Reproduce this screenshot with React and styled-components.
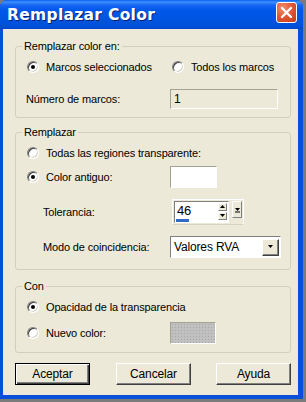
import React from "react";
import styled, { createGlobalStyle } from "styled-components";

const Global = createGlobalStyle`
  html, body {
    margin: 0;
    padding: 0;
    background: #7b7b7b;
  }
  body {
    font-family: "Liberation Sans", Arial, sans-serif;
    font-size: 11px;
    letter-spacing: -0.15px;
    color: #000;
  }
`;

const Window = styled.div`
  width: 303px;
  height: 399px;
  display: flex;
  flex-direction: column;
  background: #0a4fd8;
  border-radius: 7px 7px 0 0;
  overflow: hidden;
`;

const TitleBar = styled.div`
  height: 29px;
  flex: none;
  display: flex;
  align-items: center;
  justify-content: space-between;
  padding: 0 6px 0 7px;
  background: linear-gradient(
    #0a5ff0 0,
    #3c90fb 2px,
    #1767f3 5px,
    #0058ea 10px,
    #0055e3 60%,
    #0050d8 90%,
    #0046c8 100%
  );
`;

const Title = styled.span`
  font-family: "DejaVu Sans", Verdana, sans-serif;
  font-weight: bold;
  font-size: 15.5px;
  color: #fff;
  text-shadow: 1px 1px 0 #0a1f6e;
  letter-spacing: 0.3px;
`;

const CloseBtn = styled.div`
  width: 21px;
  height: 21px;
  box-sizing: border-box;
  border: 1px solid #fff;
  border-radius: 3px;
  background: radial-gradient(circle at 30% 25%, #f08f6c 0, #e25a37 45%, #c8381a 100%);
  display: flex;
  align-items: center;
  justify-content: center;
  margin-top: -4px;
`;

const Body = styled.div`
  flex: 1;
  margin: 0 5px 4px 3px;
  background: #ece9d8;
  padding: 10px 0 0 12px;
  display: flex;
  flex-direction: column;
`;

const Group = styled.fieldset`
  box-sizing: border-box;
  width: 276px;
  height: ${(p) => p.$h}px;
  margin: 0 0 ${(p) => p.$mb}px 0;
  padding: 0;
  border: 1px solid #d0d0bf;
  border-radius: 3px;
  display: flex;
  flex-direction: column;
`;

const Legend = styled.legend`
  margin-left: 6px;
  padding: 0 2px;
  line-height: 14px;
  font-size: 11px;
`;

const Row = styled.div`
  display: grid;
  grid-template-columns: 154px 1fr;
  align-items: center;
  height: ${(p) => p.$h}px;
  margin-top: ${(p) => p.$mt}px;
`;

const Label = styled.span`
  padding-left: ${(p) => p.$indent}px;
  white-space: nowrap;
`;

const RadioWrap = styled.label`
  display: flex;
  align-items: center;
  gap: 7px;
  padding-left: ${(p) => p.$indent ?? 11}px;
  white-space: nowrap;
`;

const Circle = styled.span`
  position: relative;
  width: 12px;
  height: 12px;
  box-sizing: border-box;
  border-radius: 50%;
  background: #fff;
  border: 1px solid;
  border-color: #808080 #fff #fff #808080;
  box-shadow: inset 1px 1px 0 #404040, inset -1px -1px 0 #d4d0c8;
  flex: none;

  &::after {
    content: "";
    display: ${(p) => (p.$on ? "block" : "none")};
    position: absolute;
    left: 3px;
    top: 3px;
    width: 4px;
    height: 4px;
    border-radius: 50%;
    background: #000;
  }
`;

const Radio = ({ on, children, indent }) => (
  <RadioWrap $indent={indent}>
    <Circle $on={on} />
    {children}
  </RadioWrap>
);

const Sunken = styled.div`
  box-sizing: border-box;
  width: ${(p) => p.$w}px;
  height: ${(p) => p.$h}px;
  border: 1px solid;
  border-color: #a5a294 #fff #fff #a5a294;
  background: ${(p) => p.$bg || "#fff"};
  display: flex;
  align-items: flex-start;
  padding: 2px 0 0 3px;
  font-size: 12px;
`;

const Swatch = styled(Sunken)`
  background-color: #c0c0c0;
  background-image: radial-gradient(#a8a8a8 0.6px, transparent 0.8px);
  background-size: 3px 3px;
`;

const Spin = styled.div`
  display: flex;
  align-items: flex-start;
  gap: 3px;
  margin-left: 2px;
  height: 26px;
  box-sizing: border-box;
  padding: 1px;
  width: 72px;
  border: 1px solid;
  border-color: #fff #fff #d6d3c4 #fff;
`;

const SpinField = styled.div`
  position: relative;
  box-sizing: border-box;
  width: 57px;
  height: 22px;
  background: #fff;
  border: 1px solid;
  border-color: #7f7f7f #fff #fff #7f7f7f;
  font-size: 13px;
  padding: 1px 0 0 2px;
`;

const Progress = styled.div`
  position: absolute;
  left: 1px;
  bottom: 0px;
  height: 3px;
  width: 13px;
  background: #316ac5;
`;

const Arrows = styled.div`
  position: absolute;
  right: 1px;
  top: 1px;
  display: flex;
  flex-direction: column;
  gap: 1px;
`;

const SmallBtn = styled.div`
  box-sizing: border-box;
  width: ${(p) => p.$w || 9}px;
  height: ${(p) => p.$h || 8}px;
  background: #ece9d8;
  border: 1px solid;
  border-color: #fff #808080 #808080 #fff;
  display: flex;
  align-items: center;
  justify-content: center;
`;

const Select = styled.div`
  box-sizing: border-box;
  width: 111px;
  height: 22px;
  background: #fff;
  border: 1px solid;
  border-color: #7f7f7f #fff #fff #7f7f7f;
  display: flex;
  align-items: center;
  justify-content: space-between;
  padding: 0 1px 0 3px;
  font-size: 12px;
`;

const DropBtn = styled.div`
  box-sizing: border-box;
  width: 17px;
  height: 17px;
  background: #ece9d8;
  border: 1px solid;
  border-color: #fff #404040 #404040 #fff;
  box-shadow: inset -1px -1px 0 #808080;
  display: flex;
  align-items: center;
  justify-content: center;
`;

const Buttons = styled.div`
  display: flex;
  margin-top: 10px;
`;

const Button = styled.div`
  box-sizing: border-box;
  width: 75px;
  height: 22px;
  margin-left: ${(p) => p.$ml || 0}px;
  display: flex;
  align-items: center;
  justify-content: center;
  background: #ece9d8;
  font-size: 12px;
  border: 1px solid;
  border-color: ${(p) => (p.$def ? "#000" : "#fff #404040 #404040 #fff")};
  box-shadow: ${(p) =>
    p.$def
      ? "inset 1px 1px 0 #fff, inset -1px -1px 0 #404040, inset -2px -2px 0 #808080"
      : "inset -1px -1px 0 #808080"};
`;

const Tri = ({ up, bar }) => (
  <svg width="7" height="6" viewBox="0 0 7 6">
    {up ? (
      <path d="M3.5 1 L6 4 H1 Z" fill="#000" />
    ) : (
      <path d="M1 1 H6 L3.5 4 Z" fill="#000" />
    )}
    {bar && <rect x="1" y="4.5" width="5" height="1" fill="#000" />}
  </svg>
);

export default function App() {
  return (
    <>
      <Global />
      <Window>
        <TitleBar>
          <Title>Remplazar Color</Title>
          <CloseBtn>
            <svg width="13" height="13" viewBox="0 0 13 13">
              <path d="M2 2 L11 11 M11 2 L2 11" stroke="#fff" strokeWidth="2.4" strokeLinecap="round" />
            </svg>
          </CloseBtn>
        </TitleBar>
        <Body>
          <Group $h={79} $mb={7}>
            <Legend>Remplazar color en:</Legend>
            <Row $h={16} $mt={6}>
              <Radio on>Marcos seleccionados</Radio>
              <Radio indent={2}>Todos los marcos</Radio>
            </Row>
            <Row $h={20} $mt={14}>
              <Label $indent={10}>Número de marcos:</Label>
              <Sunken $w={108} $h={20} $bg="#ece9d8">1</Sunken>
            </Row>
          </Group>

          <Group $h={145} $mb={9}>
            <Legend>Remplazar</Legend>
            <Row $h={16} $mt={6}>
              <Radio>Todas las regiones transparente:</Radio>
            </Row>
            <Row $h={22} $mt={5}>
              <Radio on>Color antiguo:</Radio>
              <Sunken $w={47} $h={22} />
            </Row>
            <Row $h={26} $mt={11}>
              <Label $indent={27}>Tolerancia:</Label>
              <Spin>
                <SpinField>
                  46
                  <Arrows>
                    <SmallBtn>
                      <Tri up />
                    </SmallBtn>
                    <SmallBtn>
                      <Tri />
                    </SmallBtn>
                  </Arrows>
                  <Progress />
                </SpinField>
                <SmallBtn $w={10} $h={17}>
                  <Tri bar />
                </SmallBtn>
              </Spin>
            </Row>
            <Row $h={22} $mt={11}>
              <Label $indent={27}>Modo de coincidencia:</Label>
              <Select>
                Valores RVA
                <DropBtn>
                  <Tri />
                </DropBtn>
              </Select>
            </Row>
          </Group>

          <Group $h={74} $mb={0}>
            <Legend>Con</Legend>
            <Row $h={16} $mt={6}>
              <Radio on>Opacidad de la transparencia</Radio>
            </Row>
            <Row $h={22} $mt={7}>
              <Radio>Nuevo color:</Radio>
              <Swatch $w={46} $h={22} />
            </Row>
          </Group>

          <Buttons>
            <Button $def>Aceptar</Button>
            <Button $ml={26}>Cancelar</Button>
            <Button $ml={25}>Ayuda</Button>
          </Buttons>
        </Body>
      </Window>
    </>
  );
}
